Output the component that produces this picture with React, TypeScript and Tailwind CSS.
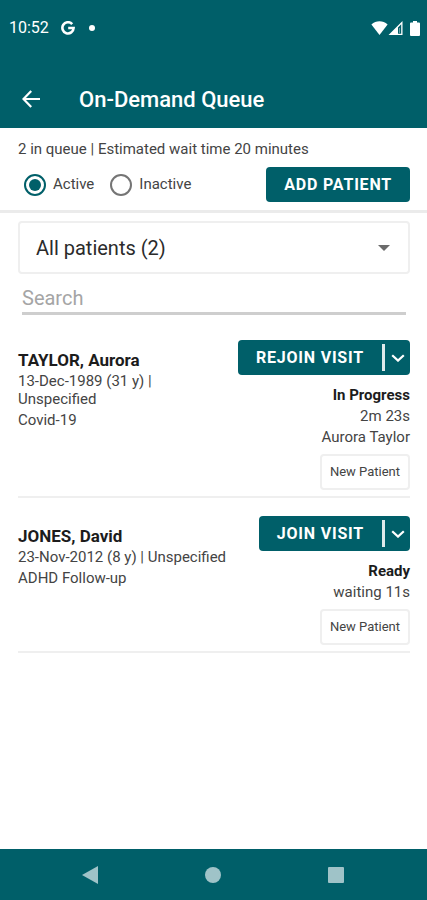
import { useState } from 'react';

type Visit = {
  name: string;
  details: string;
  reason: string;
  action: string;
  status: string;
  time: string;
  provider?: string;
};

const visits: Visit[] = [
  {
    name: 'TAYLOR, Aurora',
    details: '13-Dec-1989 (31 y) | Unspecified',
    reason: 'Covid-19',
    action: 'REJOIN VISIT',
    status: 'In Progress',
    time: '2m 23s',
    provider: 'Aurora Taylor',
  },
  {
    name: 'JONES, David',
    details: '23-Nov-2012 (8 y) | Unspecified',
    reason: 'ADHD Follow-up',
    action: 'JOIN VISIT',
    status: 'Ready',
    time: 'waiting 11s',
  },
];

function StatusBar() {
  return (
    <div className="flex h-14 items-center justify-between pr-[7px] pl-[9px]">
      <div className="flex items-center">
        <span className="text-base">10:52</span>
        <svg viewBox="0 0 14 14" className="ml-3 size-3.5" fill="none" stroke="currentColor" strokeWidth="2.6">
          <path d="M11.2 3.1A5.6 5.6 0 1 0 12.6 7H7.2" />
        </svg>
        <span className="ml-3.5 size-1.5 rounded-full bg-white" />
      </div>
      <div className="flex items-center">
        <svg viewBox="0 0 17 14" className="h-3.5 w-[17px]" fill="currentColor">
          <path d="M8.5 14 0.4 3.6C5 -0.8 12 -0.8 16.6 3.6Z" />
        </svg>
        <svg viewBox="0 0 15 14" className="h-3.5 w-[15px]" fill="currentColor">
          <path d="M0.5 14 14.5 0V14ZM10 12.7H13.2V3.2L10 6.4Z" fillRule="evenodd" />
          <path d="M11 7h1v5h-1z" opacity="0.4" />
        </svg>
        <svg viewBox="0 0 10 15" className="ml-[7px] h-[15px] w-2.5" fill="currentColor">
          <path d="M3 0h4v1.5h2q1 0 1 1V14q0 1-1 1H1q-1 0-1-1V2.5q0-1 1-1h2z" />
        </svg>
      </div>
    </div>
  );
}

function VisitRow({ visit }: { visit: Visit }) {
  return (
    <li className="flex justify-between gap-2 border-b-2 border-[#efefef] pb-1.5">
      <div className="pt-2">
        <h2 className="text-[17px] leading-6 font-bold text-[#1c1c1c]">{visit.name}</h2>
        <p className="leading-[18px]">{visit.details}</p>
        <p className="mt-0.5 leading-5">{visit.reason}</p>
      </div>
      <div className="flex shrink-0 flex-col items-end">
        <div className="flex h-[35px] items-center rounded bg-[#005f69] text-white">
          <button type="button" className="h-full pr-[18px] pl-[18px] text-base font-bold tracking-wider">
            {visit.action}
          </button>
          <span className="h-[27px] w-[3px] bg-[#dfeaeb]" />
          <button type="button" aria-label="More visit actions" className="grid h-full w-[25px] place-items-center">
            <svg viewBox="0 0 14 8" className="h-2 w-3.5" fill="none" stroke="currentColor" strokeWidth="2.2">
              <path d="m1.2 1.2 5.8 5.4 5.8-5.4" />
            </svg>
          </button>
        </div>
        <p className="mt-2.5 leading-[21px] font-bold text-[#1c1c1c]">{visit.status}</p>
        <p className="leading-[21px]">{visit.time}</p>
        {visit.provider ? <p className="leading-[21px]">{visit.provider}</p> : null}
        <span className="mt-1.5 flex h-9 items-center rounded border-2 border-[#efefef] px-2 text-[13px]">
          New Patient
        </span>
      </div>
    </li>
  );
}

export default function App() {
  const [active, setActive] = useState(true);
  const [filter, setFilter] = useState('all');
  const [search, setSearch] = useState('');

  return (
    <div className="flex min-h-screen flex-col bg-white font-['Roboto',sans-serif] text-[15px] text-[#444]">
      <header className="bg-[#005f69] text-white">
        <StatusBar />
        <div className="flex h-[72px] items-center pt-3.5 pl-[22px]">
          <button type="button" aria-label="Back">
            <svg viewBox="0 0 18 18" className="size-[18px]" fill="none" stroke="currentColor" strokeWidth="2.2">
              <path d="M18 9H1.8M9.2 1 1.5 9l7.7 8" />
            </svg>
          </button>
          <h1 className="ml-[39px] text-[22px] font-medium">On-Demand Queue</h1>
        </div>
      </header>

      <section className="border-b-[3px] border-[#ebebeb] pt-[11px] pr-[17px] pb-2 pl-[18px]">
        <p className="leading-5">2 in queue | Estimated wait time 20 minutes</p>
        <div className="mt-2 flex h-[35px] items-center justify-between">
          <div className="flex gap-4 pl-1.5">
            <label className="flex items-center gap-[7px]">
              <input
                type="radio"
                name="queue"
                checked={active}
                onChange={() => setActive(true)}
                className="grid size-[22px] appearance-none place-items-center rounded-full border-2 border-[#757575] before:size-3 before:rounded-full checked:border-[#005f69] checked:before:bg-[#005f69]"
              />
              Active
            </label>
            <label className="flex items-center gap-[7px]">
              <input
                type="radio"
                name="queue"
                checked={!active}
                onChange={() => setActive(false)}
                className="grid size-[22px] appearance-none place-items-center rounded-full border-2 border-[#757575] before:size-3 before:rounded-full checked:border-[#005f69] checked:before:bg-[#005f69]"
              />
              Inactive
            </label>
          </div>
          <button
            type="button"
            className="h-full rounded bg-[#005f69] px-[18px] text-base font-bold tracking-wider text-white"
          >
            ADD PATIENT
          </button>
        </div>
      </section>

      <main className="flex-1 pt-2 pr-[17px] pl-[18px]">
        <div className="relative">
          <select
            aria-label="Patient filter"
            value={filter}
            onChange={(event) => setFilter(event.target.value)}
            className="h-[53px] w-full appearance-none rounded border-2 border-[#efefef] px-4 text-xl text-[#2b2b2b] outline-none"
          >
            <option value="all">All patients (2)</option>
          </select>
          <svg
            viewBox="0 0 12 6"
            className="pointer-events-none absolute top-6 right-5 h-1.5 w-3 text-[#6b6b6b]"
            fill="currentColor"
          >
            <path d="M0 0h12L6 6z" />
          </svg>
        </div>
        <div className="px-1 pt-2">
          <input
            type="text"
            aria-label="Search"
            placeholder="Search"
            value={search}
            onChange={(event) => setSearch(event.target.value)}
            className="h-[33px] w-full border-b-[3px] border-[#cecece] pt-0.5 text-xl outline-none placeholder:text-[#a5a5a5]"
          />
        </div>
        <ul className="mt-[25px] space-y-[18px]">
          {visits.map((visit) => (
            <VisitRow key={visit.name} visit={visit} />
          ))}
        </ul>
      </main>

      <nav className="flex h-[51px] items-center justify-around bg-[#005f69] pr-[29px] pl-7 text-[#9fc3c8]">
        <button type="button" aria-label="Back">
          <svg viewBox="0 0 16 18" className="h-[18px] w-4" fill="currentColor">
            <path d="M16 0v18L0 9z" />
          </svg>
        </button>
        <button type="button" aria-label="Home" className="size-4 rounded-full bg-current" />
        <button type="button" aria-label="Recent apps" className="size-4 rounded-[1px] bg-current" />
      </nav>
    </div>
  );
}
